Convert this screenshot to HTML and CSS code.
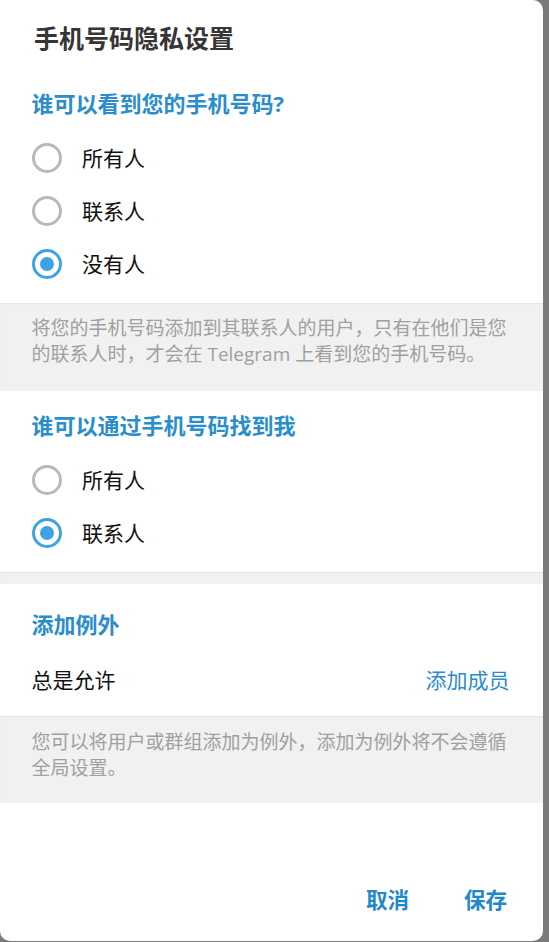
FILE: index.html
```html
<!DOCTYPE html>
<html lang="zh-CN">
<head>
<meta charset="utf-8">
<title>手机号码隐私设置</title>
<link rel="stylesheet" href="styles.css">
</head>
<body>
<div class="dialog">
  <div class="title">手机号码隐私设置</div>

  <div class="section first">
    <div class="header">谁可以看到您的手机号码?</div>
    <div class="option"><span class="radio"></span><span class="label">所有人</span></div>
    <div class="option"><span class="radio"></span><span class="label">联系人</span></div>
    <div class="option"><span class="radio checked"></span><span class="label">没有人</span></div>
  </div>

  <div class="info info-one">将您的手机号码添加到其联系人的用户，只有在他们是您的联系人时，才会在 Telegram 上看到您的手机号码。</div>

  <div class="section second">
    <div class="header">谁可以通过手机号码找到我</div>
    <div class="option"><span class="radio"></span><span class="label">所有人</span></div>
    <div class="option"><span class="radio checked"></span><span class="label">联系人</span></div>
  </div>

  <div class="divider"></div>

  <div class="section third">
    <div class="header">添加例外</div>
    <div class="exception-row">
      <span class="label">总是允许</span>
      <span class="link">添加成员</span>
    </div>
  </div>

  <div class="info info-two">您可以将用户或群组添加为例外，添加为例外将不会遵循全局设置。</div>

  <div class="footer">
    <span class="button">取消</span>
    <span class="button">保存</span>
  </div>
</div>
</body>
</html>
```

FILE: styles.css
```css
html, body {
  margin: 0;
  padding: 0;
}

body {
  background: #7b7b7b;
  width: 549px;
  height: 942px;
  overflow: hidden;
  font-family: "Open Sans", "Noto Sans CJK SC", sans-serif;
}

.dialog {
  width: 543px;
  height: 941px;
  background: #ffffff;
  border-radius: 0 10px 10px 10px;
  display: flex;
  flex-direction: column;
  overflow: hidden;
}

.title {
  padding: 23px 33px 0 34px;
  font-size: 25px;
  line-height: 30px;
  font-weight: 600;
  color: #353535;
}

.section {
  padding: 0 33px 13px 31.5px;
}

.section.first {
  padding-top: 35px;
}

.section.second {
  padding-top: 19px;
}

.section.third {
  padding-top: 25px;
  padding-bottom: 10px;
}

.header {
  font-size: 22px;
  line-height: 30px;
  font-weight: 700;
  color: #2a8dcc;
  margin-bottom: 13px;
}

.third .header {
  margin-bottom: 14px;
}

.option {
  height: 53px;
  display: flex;
  align-items: center;
  gap: 20.5px;
}

.radio {
  width: 30px;
  height: 30px;
  box-sizing: border-box;
  border: 3px solid #b9b9b9;
  border-radius: 50%;
  flex-shrink: 0;
  position: relative;
}

.radio.checked {
  border: 3px solid #3ea3e2;
}

.radio.checked::after {
  content: "";
  position: absolute;
  left: 50%;
  top: 50%;
  width: 14px;
  height: 14px;
  margin: -7px 0 0 -7px;
  border-radius: 50%;
  background: #3ea3e2;
}

.label {
  font-size: 21px;
  line-height: 30px;
  color: #111111;
}

.info {
  background: #f1f1f1;
  box-shadow: inset 0 1px 1px rgba(0, 0, 0, 0.05);
  font-size: 19px;
  line-height: 26px;
  color: #a0a0a0;
  padding-left: 31.5px;
  padding-right: 31px;
}

.info-one {
  padding-top: 12px;
  padding-bottom: 24px;
}

.info-two {
  padding-top: 13px;
  padding-bottom: 22px;
}

.divider {
  height: 12px;
  background: #f1f1f1;
  box-shadow: inset 0 1px 1px rgba(0, 0, 0, 0.06);
}

.exception-row {
  height: 53px;
  display: flex;
  align-items: center;
  justify-content: space-between;
  padding-right: 0.5px;
}

.link {
  font-size: 21px;
  line-height: 30px;
  color: #2b8dcd;
}

.footer {
  margin-top: auto;
  display: flex;
  justify-content: flex-end;
  gap: 55px;
  padding: 0 36px 26px 0;
}

.button {
  font-size: 21.5px;
  line-height: 30px;
  font-weight: 700;
  color: #2288c9;
}
```
